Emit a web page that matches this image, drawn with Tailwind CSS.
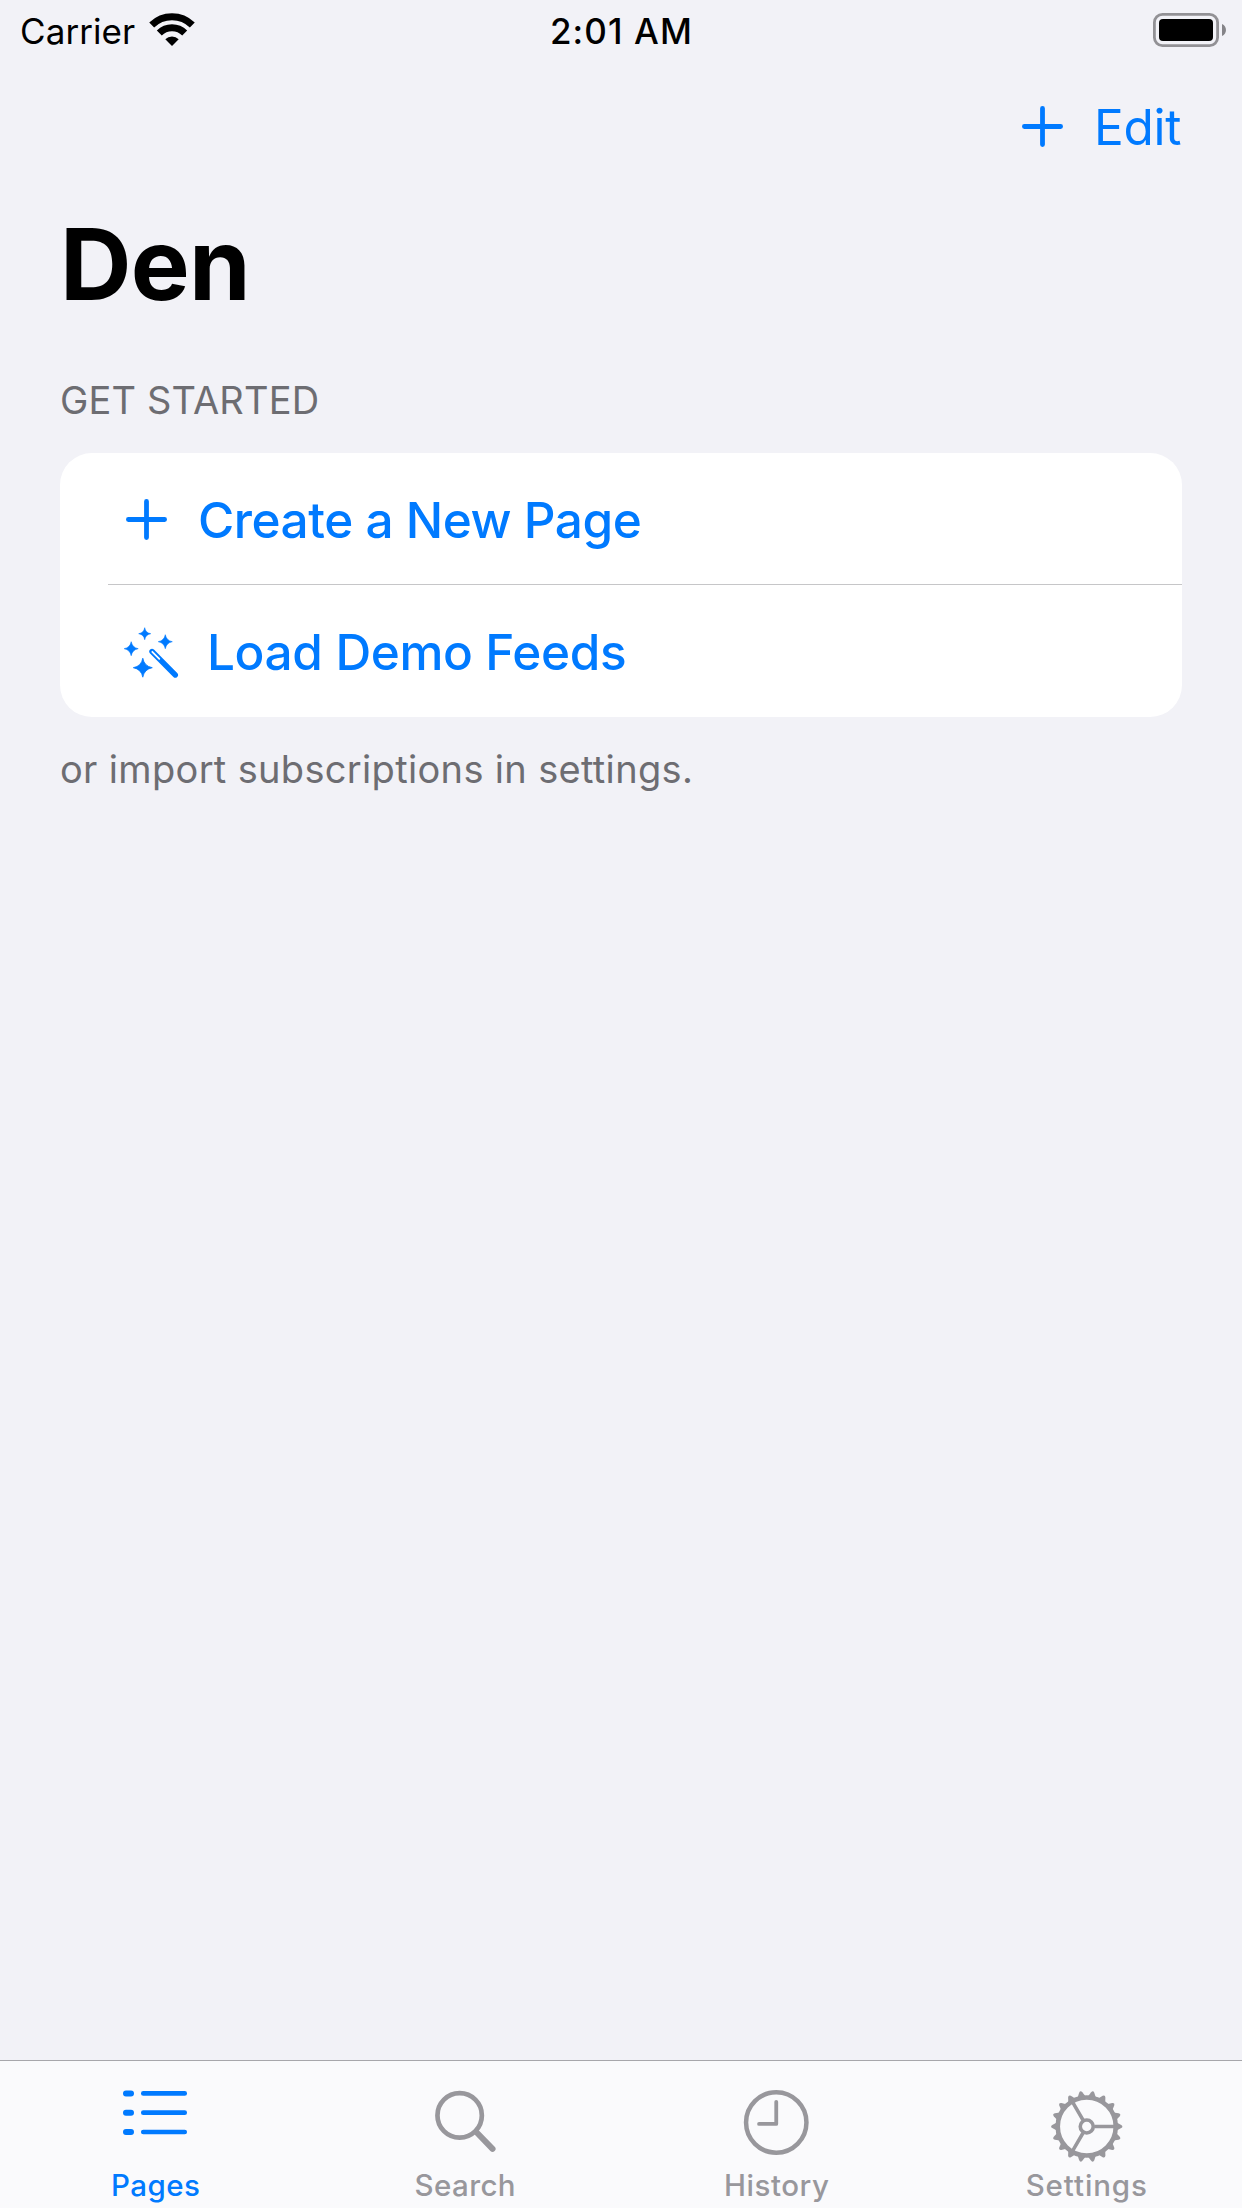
<!DOCTYPE html>
<html lang="en">
<head>
<meta charset="utf-8">
<title>Den</title>
<script src="https://cdn.jsdelivr.net/npm/@tailwindcss/browser@4"></script>
</head>
<body class="bg-[#f2f2f7]">
<div class="flex h-[2208px] w-[1242px] flex-col overflow-hidden bg-[#f2f2f7] font-[Inter,sans-serif] text-black">
  <!-- Status bar -->
  <header class="grid h-[62px] shrink-0 grid-cols-3 text-[35px] leading-[62px]">
    <div class="flex pl-5">
      <span class="w-[129px] tracking-[0.08px]">Carrier</span>
      <svg class="mt-3 h-[35px] w-[46px]" viewBox="149 12 46 35" fill="none" stroke="#000" stroke-width="7">
        <path d="M151.7 25.1A29 29 0 0 1 192.3 25.1"/>
        <path d="M159.3 33.1A18 18 0 0 1 184.7 33.1"/>
        <path d="M165.3 39.3A9.6 9.6 0 0 1 178.7 39.3L172 46Z" fill="#000" stroke="none"/>
      </svg>
    </div>
    <div class="pl-px text-center font-[550] tracking-[1.1px]">2:01 AM</div>
    <div class="flex justify-end pr-4">
      <svg class="mt-3 h-9 w-[74px]" viewBox="1152 12 74 36">
        <rect x="1154.4" y="14.4" width="63.2" height="31.2" rx="8" fill="none" stroke="#929195" stroke-width="2.8"/>
        <rect x="1159" y="19" width="54" height="22" rx="4"/>
        <path d="M1222 24c5.3 2.2 5.3 9.8 0 12z" fill="#858488"/>
      </svg>
    </div>
  </header>

  <nav class="flex h-[130px] shrink-0 items-center justify-end pr-[60px] text-[49.5px] leading-[130px] text-[#007aff]">
    <svg class="mr-[31px] mb-px h-[41px] w-[41px]" viewBox="0 0 41 41" stroke="currentColor" stroke-width="4.8" stroke-linecap="round"><path d="M20.5 2.4V38.6M2.4 20.5H38.6"/></svg>
    <span class="w-[88px] tracking-[-0.3px]">Edit</span>
  </nav>

  <main class="grow px-[60px]">
    <h1 class="text-[99px] leading-[144px] font-bold tracking-[-0.73px]">Den</h1>
    <h2 class="mt-[11px] text-[38px] leading-[106px] tracking-[0.15px] text-[#6d6d72]">GET STARTED</h2>
    <section class="overflow-hidden rounded-[32px] bg-white text-[49.5px] font-medium text-[#007aff]">
      <div class="flex h-[131px] items-center pl-[66px]">
        <svg class="mt-0.5 mr-[31px] h-[41px] w-[41px]" viewBox="0 0 41 41" stroke="currentColor" stroke-width="4.8" stroke-linecap="round"><path d="M20.5 2.4V38.6M2.4 20.5H38.6"/></svg>
        <span class="pt-[3px] leading-[131px] tracking-[-0.48px]">Create a New Page</span>
      </div>
      <div class="ml-12 h-px bg-[#c6c6c8]"></div>
      <div class="flex h-[132px] items-center pl-16">
        <svg class="mt-px mr-7 h-[52px] w-[55px]" viewBox="124 625 55 52" fill="currentColor">
          <path d="M144.7 626.7Q145.5 631.9 150.7 632.7Q145.5 633.5 144.7 638.7Q143.9 633.5 138.7 632.7Q143.9 631.9 144.7 626.7Z" stroke="currentColor" stroke-width=".6"/>
          <path d="M165.3 633.7Q166.4 639.6 172.3 640.7Q166.4 641.8 165.3 647.7Q164.2 641.8 158.3 640.7Q164.2 639.6 165.3 633.7Z" stroke="currentColor" stroke-width=".6"/>
          <path d="M131.2 640.7Q132.3 646.6 138.2 647.7Q132.3 648.8 131.2 654.7Q130.1 648.8 124.2 647.7Q130.1 646.6 131.2 640.7Z" stroke="currentColor" stroke-width=".6"/>
          <path d="M142.8 657.2Q144.3 665.2 152.3 666.7Q144.3 668.2 142.8 676.2Q141.3 668.2 133.3 666.7Q141.3 665.2 142.8 657.2Z" stroke="currentColor" stroke-width=".8"/>
          <path d="M152 650.5L175.3 674" stroke="currentColor" stroke-width="5.4" stroke-linecap="round"/>
          <path d="M152.3 650.8L159.3 657.9" stroke="#fff" stroke-width="1.8" stroke-linecap="round"/>
        </svg>
        <span class="pt-0.5 leading-[130px] tracking-[-0.38px]">Load Demo Feeds</span>
      </div>
    </section>
    <p class="text-[38px] leading-[104px] tracking-[0.33px] text-[#6d6d72]">or import subscriptions in settings.</p>
  </main>

  <!-- Tab bar -->
  <footer class="grid h-[148px] shrink-0 grid-cols-4 border-t border-[#a7a6ab] bg-[#fafafc] pt-6 text-[29.5px] leading-[41px] font-medium text-[#98979c]">
    <div class="flex flex-col items-center text-[#007aff]">
      <svg class="h-20 w-20" viewBox="115 2085 80 80" stroke="currentColor" stroke-linecap="round">
        <path d="M126 2093.4H131M126 2112.7H131M126 2132H131" stroke-width="6"/>
        <path d="M143.3 2093.4H184.7M143.3 2112.7H184.7M143.3 2132H184.7" stroke-width="4.7"/>
      </svg>
      <span class="pl-px tracking-[0.46px]">Pages</span>
    </div>
    <div class="flex flex-col items-center">
      <svg class="h-20 w-20" viewBox="425.75 2085 80 80" fill="none" stroke="currentColor" stroke-linecap="round">
        <circle cx="459.4" cy="2115.4" r="22.2" stroke-width="4.7"/>
        <path d="M476 2132L492.3 2148.8" stroke-width="6"/>
      </svg>
      <span class="pr-px tracking-[0.4px]">Search</span>
    </div>
    <div class="flex flex-col items-center">
      <svg class="h-20 w-20" viewBox="736.25 2085 80 80" fill="none" stroke="currentColor" stroke-linecap="round" stroke-linejoin="round">
        <circle cx="776.5" cy="2122.5" r="30.2" stroke-width="4.5"/>
        <path d="M776.5 2101.8V2123.9H759.3" stroke-width="3.8"/>
      </svg>
      <span class="pl-px tracking-[0.55px]">History</span>
    </div>
    <div class="flex flex-col items-center">
      <svg class="h-20 w-20" viewBox="-39.75 -41.5 80 80" fill="none" stroke="currentColor">
        <defs>
          <path id="t" d="M30 -4L34.5 -1.6Q36.8 0 34.5 1.6L30 4Z" fill="currentColor" stroke="none"/>
          <g id="t3"><use href="#t"/><use href="#t" transform="rotate(20)"/><use href="#t" transform="rotate(40)"/></g>
        </defs>
        <circle r="29" stroke-width="4.6"/>
        <circle r="6.5" stroke-width="3.6"/>
        <path d="M7.5 0H28M-3.75 -6.5L-14 -24.2M-3.75 6.5L-14 24.2" stroke-width="3.5"/>
        <use href="#t3"/><use href="#t3" transform="rotate(60)"/><use href="#t3" transform="rotate(120)"/><use href="#t3" transform="rotate(180)"/><use href="#t3" transform="rotate(240)"/><use href="#t3" transform="rotate(300)"/>
      </svg>
      <span class="tracking-[0.9px]">Settings</span>
    </div>
  </footer>
</div>
</body>
</html>
